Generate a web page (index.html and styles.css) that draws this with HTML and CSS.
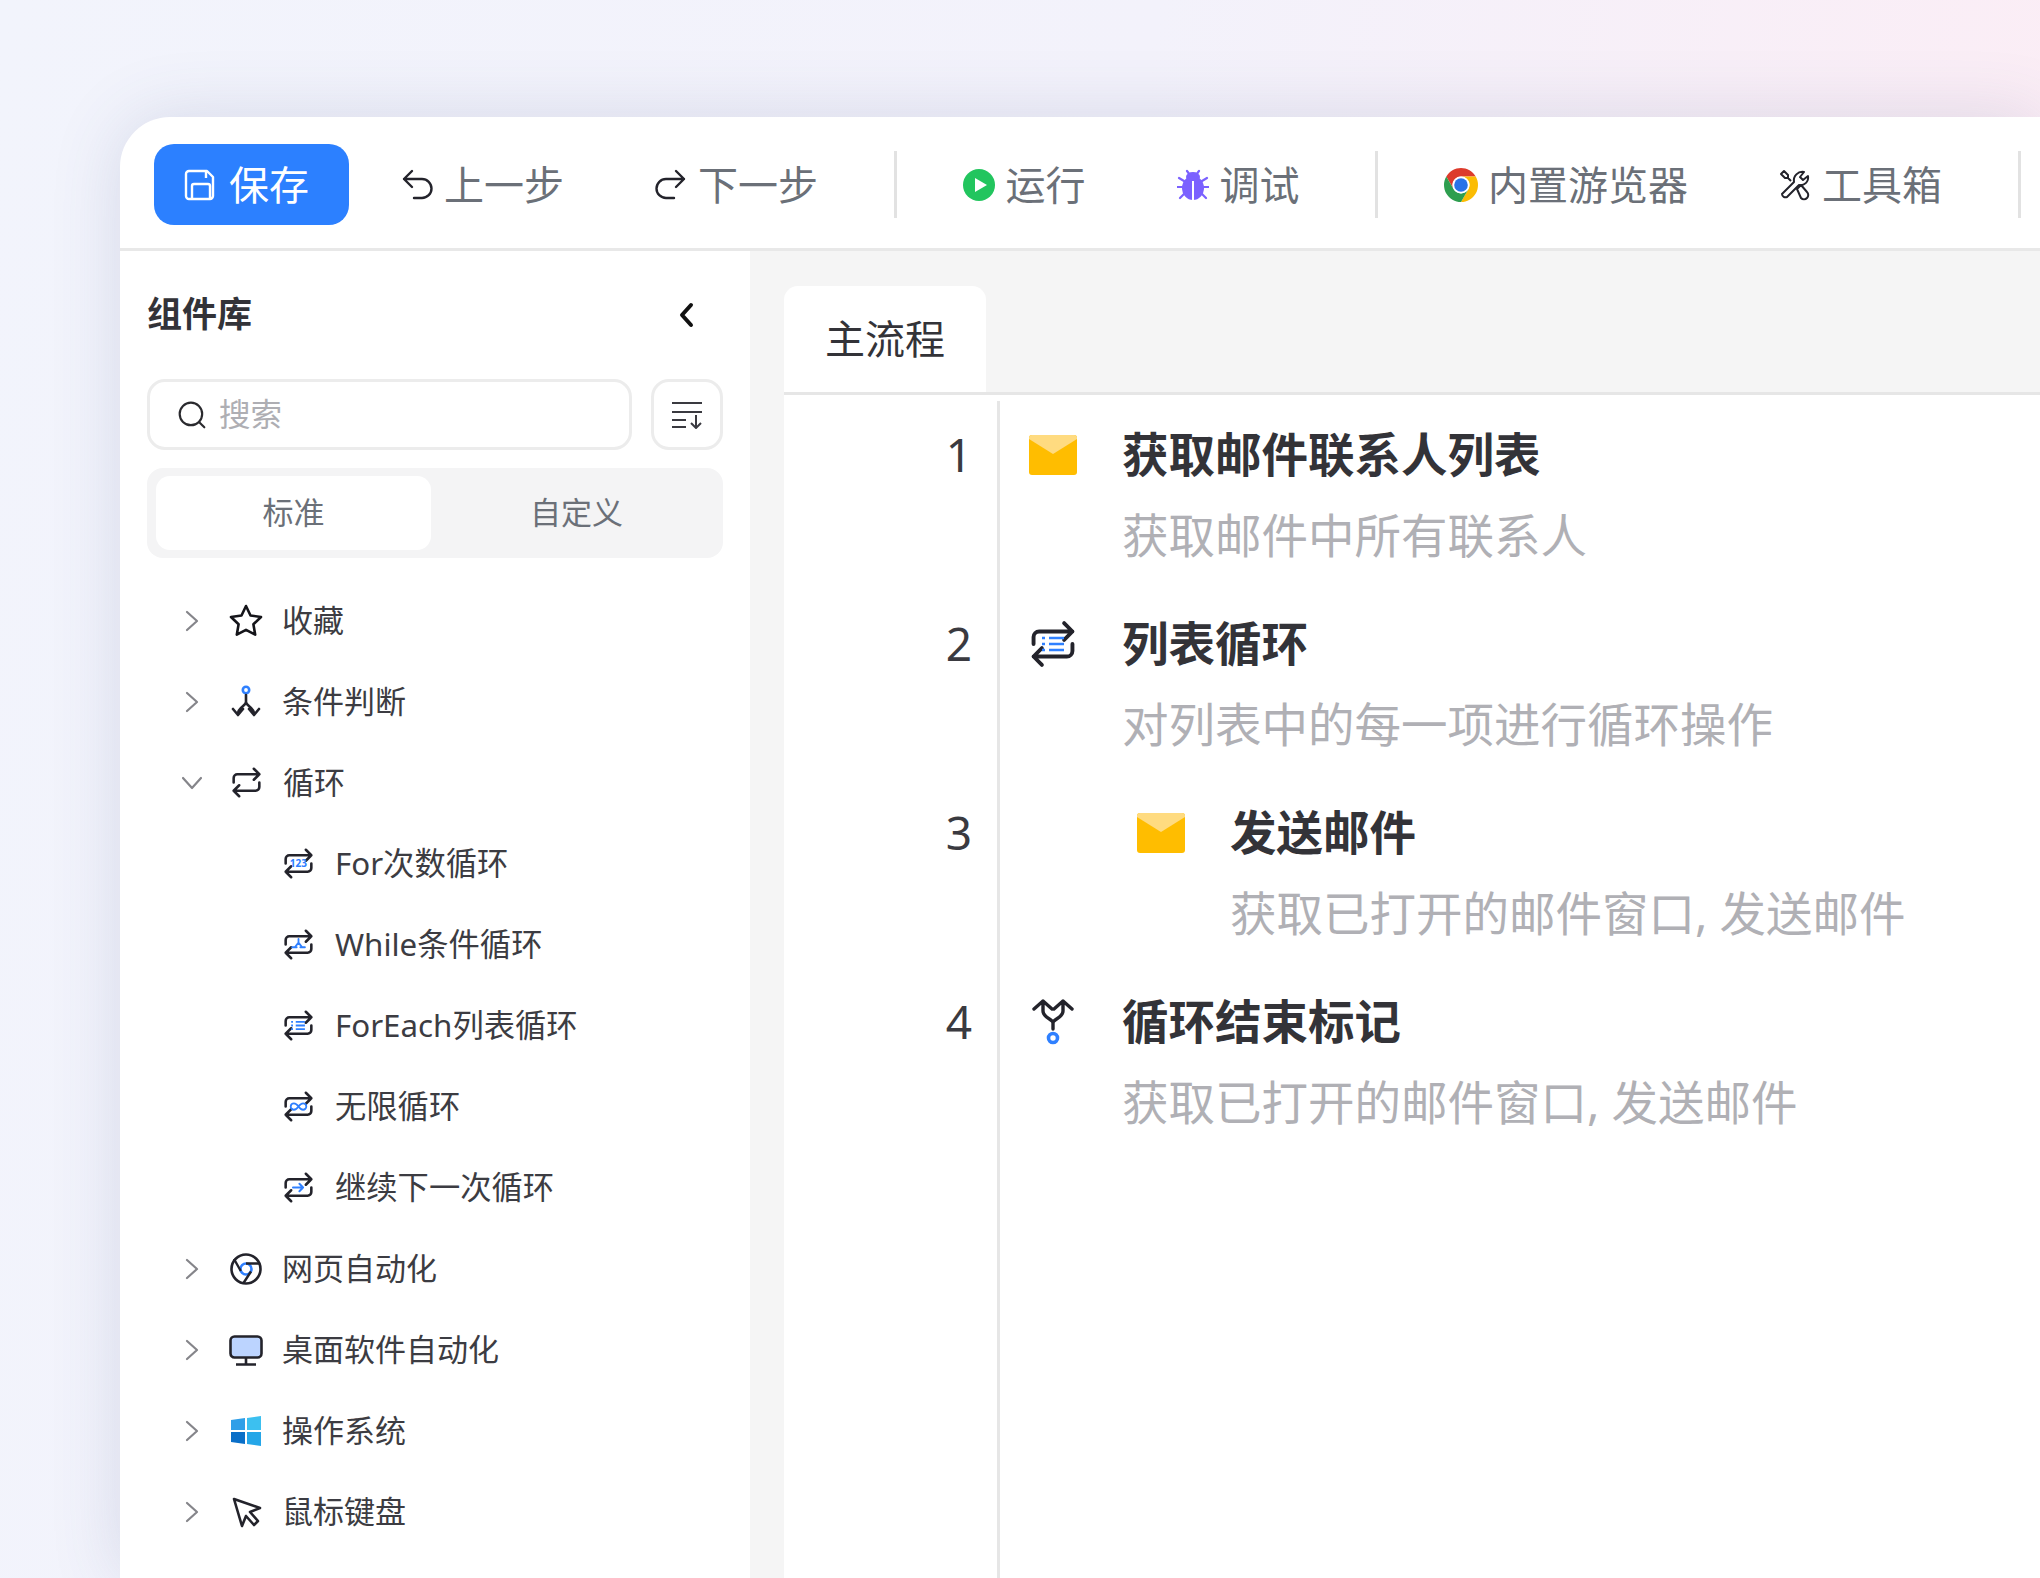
FILE: index.html
```html
<!DOCTYPE html>
<html lang="zh-CN">
<head>
<meta charset="UTF-8">
<title>组件库</title>
<link rel="stylesheet" href="styles.css">
</head>
<body>

<svg class="defs" width="0" height="0">
<defs>
<symbol id="loop" viewBox="0 0 36 36">
<path d="M4 18v-5a4 4 0 0 1 4-4h24M26 3l6 6-6 6M32 18v5a4 4 0 0 1-4 4H4M10 21l-6 6 6 6" fill="none" stroke="#23232b" stroke-width="2.800" stroke-linecap="round" stroke-linejoin="round"/>
</symbol>
<symbol id="mail" viewBox="0 0 48 40">
<rect width="48" height="40" rx="3" fill="#ffbd00"/>
<path d="M0 3a3 3 0 0 1 3-3h42a3 3 0 0 1 3 3v1L24 19 0 4z" fill="#ffdb80"/>
</symbol>
<symbol id="chev" viewBox="0 0 24 24">
<path d="M7 3l10 9-10 9" fill="none" stroke="#85858a" stroke-width="2.200" stroke-linecap="round" stroke-linejoin="round"/>
</symbol>
</defs>
</svg>

<div class="card">

<!-- Toolbar -->
<div class="toolbar">
<button class="save">
<svg class="ic" viewBox="0 0 32 32"><path d="M5 2h18l6 6v19a3 3 0 0 1-3 3H5a3 3 0 0 1-3-3V5a3 3 0 0 1 3-3zM22 3v6M8 29V17a2 2 0 0 1 2-2h14a2 2 0 0 1 2 2v12" fill="none" stroke="#fff" stroke-width="2.400" stroke-linejoin="round"/></svg>
<span>保存</span>
</button>
<div class="tool-group first">
<div class="tool">
<svg class="ic" viewBox="0 0 32 32"><path d="M11 2L3 10l8 8M3 10h18a9 9 0 0 1 0 19h-8" fill="none" stroke="#23232b" stroke-width="2.400" stroke-linecap="round" stroke-linejoin="round"/></svg>
<span>上一步</span>
</div>
<div class="tool">
<svg class="ic" viewBox="0 0 32 32"><path d="M21 2l8 8-8 8M29 10H11a9 9 0 0 0 0 19h8" fill="none" stroke="#23232b" stroke-width="2.400" stroke-linecap="round" stroke-linejoin="round"/></svg>
<span>下一步</span>
</div>
</div>
<div class="tool-group">
<div class="tool">
<svg class="ic" viewBox="0 0 32 32"><circle cx="16" cy="16" r="16" fill="#22c55e"/><path d="M12 9l12 7-12 7z" fill="#fff"/></svg>
<span>运行</span>
</div>
<div class="tool">
<svg class="ic" viewBox="0 0 32 32">
<path d="M10 2l3 4M22 2l-3 4M7 12L2 9M25 12l5-3M5 18H0M27 18h5M7 25l-4 4M25 25l4 4" stroke="#7b61ff" stroke-width="2.200" stroke-linecap="round"/>
<ellipse cx="16" cy="8" rx="7" ry="5" fill="#7b61ff"/>
<ellipse cx="16" cy="19" rx="11" ry="12" fill="#7b61ff"/>
<rect x="15" y="12" width="2" height="19" fill="#fff"/>
</svg>
<span>调试</span>
</div>
</div>
<div class="tool-group">
<div class="tool chrome-tool">
<svg class="ic chrome" viewBox="0 0 34 34">
<path d="M2.280 8.500A17 17 0 0 1 31.720 8.500H17A8.500 8.500 0 0 0 9.640 21.250z" fill="#dd3b2c"/>
<path d="M31.720 8.500A17 17 0 0 1 17 34l7.360-12.750A8.500 8.500 0 0 0 17 8.500z" fill="#fbbc04"/>
<path d="M17 34A17 17 0 0 1 2.280 8.500L9.640 21.250A8.500 8.500 0 0 0 24.360 21.250z" fill="#2e9e4f"/>
<circle cx="17" cy="17" r="8.500" fill="#fff"/>
<circle cx="17" cy="17" r="6.800" fill="#2a72e8"/>
</svg>
<span>内置游览器</span>
</div>
<div class="tool">
<svg class="ic" viewBox="0 0 32 32">
<path d="M3 25L15 13C14 7 19 2 25 3l-4 5 3 3 5-4c1 6-4 10-9 9L8 28a3.500 3.500 0 0 1-5-3z" fill="none" stroke="#23232b" stroke-width="2" stroke-linejoin="round"/>
<path d="M12 12L9 9H6L2 5l3-3 4 4v3l3 3M18 20l4-4 6 7a4.200 4.200 0 0 1-6 6z" fill="none" stroke="#23232b" stroke-width="2" stroke-linejoin="round"/>
</svg>
<span>工具箱</span>
</div>
</div>
</div>

<div class="workspace">

<!-- Sidebar -->
<div class="sidebar">
<div class="side-head">
<h2>组件库</h2>
<svg class="collapse" viewBox="0 0 18 28"><path d="M14 4L5 14l9 10" fill="none" stroke="#111" stroke-width="4" stroke-linecap="round" stroke-linejoin="round"/></svg>
</div>
<div class="search-row">
<div class="search">
<svg class="search-ic" viewBox="0 0 28 28"><circle cx="13" cy="13" r="10.500" fill="none" stroke="#2a2a2e" stroke-width="2"/><path d="M20.500 20.500l5 5" stroke="#2a2a2e" stroke-width="2" stroke-linecap="round"/></svg>
<span>搜索</span>
</div>
<button class="sort">
<svg viewBox="0 0 32 28"><path d="M1 2h30M1 11h30M1 19h14M1 26h14M25 14v13M20 22l5 5 5-5" fill="none" stroke="#3a3a40" stroke-width="2"/></svg>
</button>
</div>
<div class="segment">
<div class="seg active">标准</div>
<div class="seg">自定义</div>
</div>

<div class="tree">
<div class="row">
<svg class="chev"><use href="#chev"/></svg>
<svg class="ri" viewBox="0 0 36 36"><path d="M18 3l4.500 9.500 10.500 1.500-7.600 7.300 1.800 10.400L18 26.800l-9.200 4.900 1.800-10.400L3 14l10.500-1.500z" fill="none" stroke="#15151a" stroke-width="2.600" stroke-linejoin="round"/></svg>
<span>收藏</span>
</div>
<div class="row">
<svg class="chev"><use href="#chev"/></svg>
<svg class="ri" viewBox="0 0 36 36"><circle cx="18" cy="6" r="3.200" fill="none" stroke="#2f80ff" stroke-width="2.600"/><path d="M18 11v7c0 4-8 5-8 12M18 18c0 4 8 5 8 12M5 25l5 6 5-6M21 25l5 6 5-6" fill="none" stroke="#23232b" stroke-width="2.600" stroke-linecap="round" stroke-linejoin="round"/></svg>
<span>条件判断</span>
</div>
<div class="row">
<svg class="chev down"><use href="#chev"/></svg>
<svg class="ri sm"><use href="#loop"/></svg>
<span>循环</span>
</div>
<div class="row child">
<svg class="ri sm" viewBox="0 0 36 36"><use href="#loop" width="36" height="36"/><text x="18" y="22" class="mini">123</text></svg>
<span>For次数循环</span>
</div>
<div class="row child">
<svg class="ri sm" viewBox="0 0 36 36"><use href="#loop" width="36" height="36"/><path d="M18 12v4l-4 5M18 16l4 5M11 21h5M20 21h5" fill="none" stroke="#2f80ff" stroke-width="2" stroke-linecap="round"/></svg>
<span>While条件循环</span>
</div>
<div class="row child">
<svg class="ri sm" viewBox="0 0 36 36"><use href="#loop" width="36" height="36"/><path d="M15 14h10M15 18h10M15 22h10M10 14h2M10 18h2M10 22h2" fill="none" stroke="#2f80ff" stroke-width="2"/></svg>
<span>ForEach列表循环</span>
</div>
<div class="row child">
<svg class="ri sm" viewBox="0 0 36 36"><use href="#loop" width="36" height="36"/><path d="M18 18c-2-3-3-3.500-5-3.500a3.500 3.500 0 0 0 0 7c2 0 3-.5 5-3.500s3-3.500 5-3.500a3.500 3.500 0 0 1 0 7c-2 0-3-.5-5-3.500z" fill="none" stroke="#2f80ff" stroke-width="2"/></svg>
<span>无限循环</span>
</div>
<div class="row child">
<svg class="ri sm" viewBox="0 0 36 36"><use href="#loop" width="36" height="36"/><path d="M12 18h11M19 14l4 4-4 4" fill="none" stroke="#2f80ff" stroke-width="2.200" stroke-linecap="round" stroke-linejoin="round"/></svg>
<span>继续下一次循环</span>
</div>
<div class="row">
<svg class="chev"><use href="#chev"/></svg>
<svg class="ri" viewBox="0 0 36 36"><circle cx="18" cy="18" r="14.500" fill="none" stroke="#23232b" stroke-width="2.600"/><circle cx="18" cy="18" r="5.500" fill="none" stroke="#2f80ff" stroke-width="2.600"/><path d="M18 12.500h13M12.800 20L6 8M23 20.500L15.500 32" fill="none" stroke="#23232b" stroke-width="2.400"/></svg>
<span>网页自动化</span>
</div>
<div class="row">
<svg class="chev"><use href="#chev"/></svg>
<svg class="ri" viewBox="0 0 36 36"><rect x="2.500" y="4.500" width="31" height="21" rx="4" fill="#bcd4ff" stroke="#23232b" stroke-width="2.600"/><path d="M18 26v6M8 32.500h20" stroke="#23232b" stroke-width="2.600"/></svg>
<span>桌面软件自动化</span>
</div>
<div class="row">
<svg class="chev"><use href="#chev"/></svg>
<svg class="ri" viewBox="0 0 36 36">
<path d="M3 7l14-2v12H3z" fill="#2f9fe8"/><path d="M19 5l14-2v14H19z" fill="#3cc0f0"/>
<path d="M3 19h14v12L3 29z" fill="#0a6fc8"/><path d="M19 19h14v14l-14-2z" fill="#25a6e8"/>
</svg>
<span>操作系统</span>
</div>
<div class="row">
<svg class="chev"><use href="#chev"/></svg>
<svg class="ri" viewBox="0 0 36 36"><path d="M6 5l26 9-10 4 8 9-4 4-8-9-4 10z" fill="none" stroke="#23232b" stroke-width="2.600" stroke-linejoin="round"/></svg>
<span>鼠标键盘</span>
</div>
</div>
</div>

<!-- Main flow -->
<div class="main">
<div class="tabs"><div class="tab">主流程</div></div>
<div class="flow">
<div class="step">
<div class="num">1</div>
<div class="step-body">
<svg class="step-ic"><use href="#mail"/></svg>
<div><div class="step-title">获取邮件联系人列表</div><div class="step-desc">获取邮件中所有联系人</div></div>
</div>
</div>
<div class="step">
<div class="num">2</div>
<div class="step-body">
<svg class="step-ic tall" viewBox="0 0 48 48"><use href="#loop" x="-1" y="-1" width="50" height="50"/><path d="M20 18h15M20 24h15M20 30h15M13 18h3M13 24h3M13 30h3" fill="none" stroke="#2f80ff" stroke-width="2.600"/></svg>
<div><div class="step-title">列表循环</div><div class="step-desc">对列表中的每一项进行循环操作</div></div>
</div>
</div>
<div class="step">
<div class="num">3</div>
<div class="step-body nested">
<svg class="step-ic"><use href="#mail"/></svg>
<div><div class="step-title">发送邮件</div><div class="step-desc">获取已打开的邮件窗口, 发送邮件</div></div>
</div>
</div>
<div class="step">
<div class="num">4</div>
<div class="step-body">
<svg class="step-ic tall" viewBox="0 0 48 48"><path d="M24 31v-6c0-4-10-5-10-12V3M24 25c0-4 10-5 10-12V3M5 11l9-8 9 8M25 11l9-8 9 8" fill="none" stroke="#23232b" stroke-width="3.400" stroke-linecap="round" stroke-linejoin="round"/><circle cx="24" cy="40" r="4.500" fill="none" stroke="#2f80ff" stroke-width="3.600"/></svg>
<div><div class="step-title">循环结束标记</div><div class="step-desc">获取已打开的邮件窗口, 发送邮件</div></div>
</div>
</div>
</div>
</div>

</div>
</div>

</body>
</html>
```
FILE: styles.css
```css
*{margin:0;padding:0;box-sizing:border-box;font-family:"Noto Sans","Noto Sans CJK SC",sans-serif;}
html,body{height:100%;overflow:hidden;}
body{
background:linear-gradient(100deg,#f2f4fc 0%,#f3f2fb 50%,#fdecf4 100%);
padding:117px 0 0 120px;
}
.defs{position:absolute;}
button{border:none;background:none;}

.card{
height:100%;display:flex;flex-direction:column;background:#fff;
border-radius:50px 0 0 0;box-shadow:0 0 70px rgba(70,80,130,.16);
}

/* Toolbar */
.toolbar{
display:flex;align-items:center;height:134px;padding:4px 0 0 34px;flex:none;
border-bottom:3px solid #e8e8e8;white-space:nowrap;
}
.toolbar span{margin-bottom:4px;}
.save{
display:flex;align-items:center;gap:13px;width:195px;height:81px;padding-left:30px;
background:#2c80ff;border-radius:20px;color:#fff;font-size:40px;margin-right:52px;
}
.ic{width:32px;height:32px;flex:none;}
.chrome{width:34px;height:34px;}
.tool-group{display:flex;align-items:center;gap:91px;height:67px;padding:0 75.500px 0 66px;border-right:3px solid #e2e2e2;}
.tool-group.first{padding-left:0;}
.tool{display:flex;align-items:center;gap:11px;font-size:40px;color:#6b7078;}
.tool.chrome-tool{gap:10px;}

.workspace{flex:1;display:flex;min-height:0;}

/* Sidebar */
.sidebar{width:630px;flex:none;padding:0 27px;background:#fff;}
.side-head{display:flex;align-items:center;justify-content:space-between;height:128px;}
.side-head h2{font-size:35px;font-weight:700;color:#333338;padding-bottom:7px;}
.collapse{width:18px;height:28px;margin-right:28px;}
.search-row{display:flex;gap:19px;height:71px;margin-bottom:18px;}
.search{
flex:1;display:flex;align-items:center;gap:12px;padding-left:27px;
border:3px solid #ececec;border-radius:18px;font-size:31.500px;color:#aeaeb3;
}
.search span{margin-bottom:5px;}
.search-ic{width:30px;height:30px;}
.sort{width:72px;border:3px solid #ececec;border-radius:18px;display:flex;align-items:center;justify-content:center;}
.sort svg{width:32px;height:28px;}
.segment{display:flex;height:90px;padding:8px 9px;background:#f4f4f5;border-radius:16px;}
.seg{flex:1;display:flex;align-items:center;justify-content:center;font-size:31px;color:#6b7078;border-radius:14px;padding:0 0 5px 8px;}
.seg.active{flex:none;width:275px;background:#fff;padding-left:0;}

/* Tree */
.tree{margin-top:22px;}
.row{display:flex;align-items:center;height:81px;padding-left:33px;font-size:31px;color:#3c3c42;}
.row span{margin-bottom:4px;}
.chev{width:24px;height:24px;margin-right:24px;flex:none;}
.chev.down{transform:rotate(90deg);}
.ri{width:36px;height:36px;margin-right:18px;flex:none;}
.ri.sm{width:33px;height:33px;margin:0 20px 0 2px;}
.row.child{padding-left:133px;font-size:31.300px;}
.mini{font-size:11px;font-weight:700;fill:#2f80ff;text-anchor:middle;}

/* Main */
.main{flex:1;display:flex;flex-direction:column;background:#f5f5f5;padding-left:34px;min-width:0;}
.tabs{height:141px;flex:none;display:flex;align-items:flex-end;}
.tab{
width:202px;height:106px;display:flex;align-items:center;justify-content:center;
background:#fff;border-radius:14px 14px 0 0;font-size:40px;color:#333338;padding-bottom:5px;
}
.flow{flex:1;display:flex;flex-direction:column;background:#fff;border-top:3px solid #e6e6e6;padding-top:6px;}
.step{display:flex;height:189px;flex:none;}
.step:last-child{flex:1;}
.num{width:213px;padding:17px 25px 0 0;text-align:right;font-size:46px;line-height:72px;color:#3a3a40;flex:none;}
.step-body{flex:1;display:flex;gap:45px;padding:23px 0 0 29px;border-left:3px solid #e6e6e6;}
.step-body.nested{padding-left:137px;}
.step-ic{width:48px;height:40px;margin-top:11px;flex:none;}
.step-ic.tall{height:48px;margin-top:7px;}
.step-title{font-size:46.500px;font-weight:600;line-height:60px;color:#333338;}
.step-desc{font-size:46.500px;line-height:60px;margin-top:21px;color:#b0b0b5;}
```
